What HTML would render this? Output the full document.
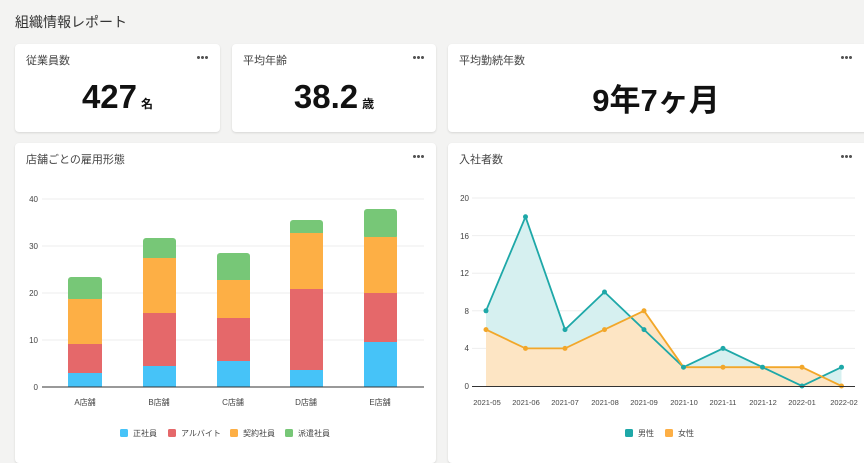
<!DOCTYPE html>
<html><head><meta charset="utf-8"><style>
*{margin:0;padding:0;box-sizing:border-box}
body{width:864px;height:453px;overflow:hidden;background:#f3f3f2;font-family:"Liberation Sans","Noto Sans CJK JP",sans-serif;position:relative;color:#222}
.card{position:absolute;background:#fff;border-radius:4px;box-shadow:0 1px 2px rgba(0,0,0,.12)}
.t{position:absolute;left:11px;top:8px;font-size:11px;color:#444}
.dots{position:absolute;right:12px;top:12px;width:11px;height:3px;
background:radial-gradient(circle at 1.5px 1.5px,#555 1.4px,transparent 1.6px) 0 0/4px 3px repeat-x}
.big{position:absolute;left:0;right:0;top:34px;text-align:center;font-weight:bold;font-size:33px;color:#111}
.big small{font-size:12px;margin-left:4px}
svg{position:absolute;left:0;top:0}
svg text{font-family:"Liberation Sans","Noto Sans CJK JP",sans-serif}
</style></head><body>
<div style="position:absolute;left:15px;top:12px;font-size:14px;color:#333">組織情報レポート</div>
<div class="card" style="left:15px;top:44px;width:205px;height:88px"><div class="t">従業員数</div><div class="dots"></div><div class="big">427<small>名</small></div></div>
<div class="card" style="left:232px;top:44px;width:204px;height:88px"><div class="t">平均年齢</div><div class="dots"></div><div class="big">38.2<small>歳</small></div></div>
<div class="card" style="left:448px;top:44px;width:430px;height:88px"><div class="t">平均勤続年数</div><div class="dots" style="right:26px"></div><div class="big" style="right:14px;top:31px;font-size:31px">9年7ヶ月</div></div>
<div class="card" style="left:15px;top:143px;width:421px;height:320px"><div class="t">店舗ごとの雇用形態</div><div class="dots"></div></div>
<div class="card" style="left:448px;top:143px;width:430px;height:320px"><div class="t">入社者数</div><div class="dots" style="right:26px"></div></div>
<svg width="864" height="453" viewBox="0 0 864 453">
<g stroke="#eee" stroke-width="1">
<line x1="42" x2="424" y1="199" y2="199"/><line x1="42" x2="424" y1="246" y2="246"/><line x1="42" x2="424" y1="293" y2="293"/><line x1="42" x2="424" y1="340" y2="340"/>
<line x1="472" x2="855" y1="198" y2="198"/><line x1="472" x2="855" y1="235.6" y2="235.6"/><line x1="472" x2="855" y1="273.2" y2="273.2"/><line x1="472" x2="855" y1="310.8" y2="310.8"/><line x1="472" x2="855" y1="348.4" y2="348.4"/>
</g>
<g font-size="8" fill="#444" text-anchor="end">
<text x="38" y="202">40</text><text x="38" y="249">30</text><text x="38" y="296">20</text><text x="38" y="343">10</text><text x="38" y="390">0</text>
<text x="469" y="201">20</text><text x="469" y="239">16</text><text x="469" y="276">12</text><text x="469" y="314">8</text><text x="469" y="351">4</text><text x="469" y="389">0</text>
</g>
<g>
<rect x="68" y="277" width="34" height="24" rx="3" fill="#77c777"/><rect x="68" y="299" width="34" height="45" fill="#fdaf45"/><rect x="68" y="344" width="34" height="29" fill="#e5686a"/><rect x="68" y="373" width="34" height="14" fill="#46c3f8"/>
<rect x="143" y="238" width="33" height="24" rx="3" fill="#77c777"/><rect x="143" y="258" width="33" height="55" fill="#fdaf45"/><rect x="143" y="313" width="33" height="53" fill="#e5686a"/><rect x="143" y="366" width="33" height="21" fill="#46c3f8"/>
<rect x="217" y="253" width="33" height="30" rx="3" fill="#77c777"/><rect x="217" y="280" width="33" height="38" fill="#fdaf45"/><rect x="217" y="318" width="33" height="43" fill="#e5686a"/><rect x="217" y="361" width="33" height="26" fill="#46c3f8"/>
<rect x="290" y="220" width="33" height="16" rx="3" fill="#77c777"/><rect x="290" y="233" width="33" height="56" fill="#fdaf45"/><rect x="290" y="289" width="33" height="81" fill="#e5686a"/><rect x="290" y="370" width="33" height="17" fill="#46c3f8"/>
<rect x="364" y="209" width="33" height="30" rx="3" fill="#77c777"/><rect x="364" y="237" width="33" height="56" fill="#fdaf45"/><rect x="364" y="293" width="33" height="49" fill="#e5686a"/><rect x="364" y="342" width="33" height="45" fill="#46c3f8"/>
</g>
<line x1="42" x2="424" y1="387" y2="387" stroke="#333" stroke-width="1"/>
<g font-size="8" fill="#444" text-anchor="middle">
<text x="85" y="405">A店舗</text><text x="159" y="405">B店舗</text><text x="233" y="405">C店舗</text><text x="306" y="405">D店舗</text><text x="380" y="405">E店舗</text>
</g>
<g font-size="8" fill="#444">
<rect x="120" y="429" width="8" height="8" rx="1.5" fill="#46c3f8"/><text x="133" y="436">正社員</text>
<rect x="168" y="429" width="8" height="8" rx="1.5" fill="#e5686a"/><text x="181" y="436">アルバイト</text>
<rect x="230" y="429" width="8" height="8" rx="1.5" fill="#fdaf45"/><text x="243" y="436">契約社員</text>
<rect x="285" y="429" width="8" height="8" rx="1.5" fill="#77c777"/><text x="298" y="436">派遣社員</text>
</g>
<polygon fill="#d6f0f0" points="486,386 486,310.8 525.5,216.8 565,329.6 604.5,292 644,329.6 683.5,367.2 723,348.4 762.5,367.2 802,386 841.5,367.2 841.5,386"/>
<polygon fill="#fde5c4" points="486,386 486,329.6 525.5,348.4 565,348.4 604.5,329.6 644,310.8 683.5,367.2 723,367.2 762.5,367.2 802,367.2 841.5,386"/>
<polyline fill="none" stroke="#1ea8a8" stroke-width="1.8" points="486,310.8 525.5,216.8 565,329.6 604.5,292 644,329.6 683.5,367.2 723,348.4 762.5,367.2 802,386 841.5,367.2"/>
<polyline fill="none" stroke="#f2a72a" stroke-width="1.8" points="486,329.6 525.5,348.4 565,348.4 604.5,329.6 644,310.8 683.5,367.2 723,367.2 762.5,367.2 802,367.2 841.5,386"/>
<g fill="#1ea8a8"><circle cx="486" cy="310.8" r="2.5"/><circle cx="525.5" cy="216.8" r="2.5"/><circle cx="565" cy="329.6" r="2.5"/><circle cx="604.5" cy="292" r="2.5"/><circle cx="644" cy="329.6" r="2.5"/><circle cx="683.5" cy="367.2" r="2.5"/><circle cx="723" cy="348.4" r="2.5"/><circle cx="762.5" cy="367.2" r="2.5"/><circle cx="802" cy="386" r="2.5"/><circle cx="841.5" cy="367.2" r="2.5"/></g>
<g fill="#f2a72a"><circle cx="486" cy="329.6" r="2.5"/><circle cx="525.5" cy="348.4" r="2.5"/><circle cx="565" cy="348.4" r="2.5"/><circle cx="604.5" cy="329.6" r="2.5"/><circle cx="644" cy="310.8" r="2.5"/><circle cx="723" cy="367.2" r="2.5"/><circle cx="802" cy="367.2" r="2.5"/><circle cx="841.5" cy="386" r="2.5"/></g>
<line x1="472" x2="855" y1="386.5" y2="386.5" stroke="#333" stroke-width="1"/>
<g font-size="7.5" fill="#444" text-anchor="middle">
<text x="487" y="405">2021-05</text><text x="526" y="405">2021-06</text><text x="565" y="405">2021-07</text><text x="605" y="405">2021-08</text><text x="644" y="405">2021-09</text><text x="684" y="405">2021-10</text><text x="723" y="405">2021-11</text><text x="763" y="405">2021-12</text><text x="802" y="405">2022-01</text><text x="844" y="405">2022-02</text>
</g>
<g font-size="8" fill="#444">
<rect x="625" y="429" width="8" height="8" rx="1.5" fill="#1ea8a8"/><text x="638" y="436">男性</text>
<rect x="665" y="429" width="8" height="8" rx="1.5" fill="#fdaf45"/><text x="678" y="436">女性</text>
</g>
</svg>
</body></html>
